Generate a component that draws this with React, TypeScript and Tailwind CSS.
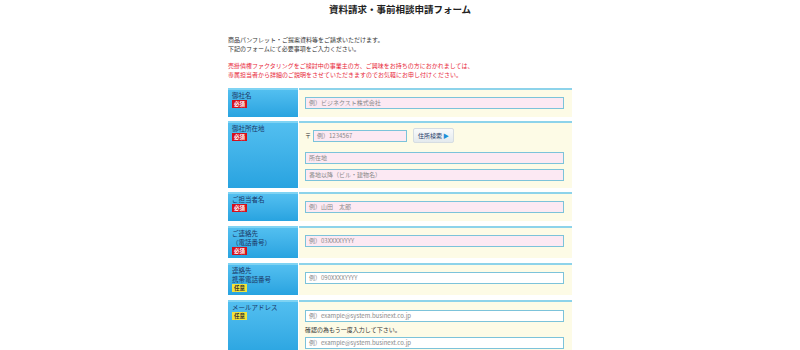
import React from "react";

const font = "font-['Noto_Sans_CJK_JP','Noto_Sans',sans-serif]";

function Badge({ kind }: { kind: "req" | "opt" }) {
  return kind === "req" ? (
    <div className="w-fit bg-[#d4101c] text-white text-[5.5px] leading-[8px] px-[2px] font-bold">必須</div>
  ) : (
    <div className="w-fit bg-[#f3e33a] text-[#333] text-[5.5px] leading-[8px] px-[2px] font-bold">任意</div>
  );
}

function Field({ placeholder, pink = true, className = "" }: { placeholder: string; pink?: boolean; className?: string }) {
  return (
    <div
      className={`h-[12px] border border-[#7cc3da] ${pink ? "bg-[#fce9f3]" : "bg-white"} text-[6px] leading-[10px] text-[#888] pl-[3px] ${className}`}
    >
      {placeholder}
    </div>
  );
}

function Row({
  label,
  kind,
  pad = "pt-[7px] pb-[8px]",
  children,
}: {
  label: string[];
  kind: "req" | "opt";
  pad?: string;
  children: React.ReactNode;
}) {
  return (
    <div className="flex leading-[8px]">
      <div className="w-[70px] shrink-0 border-t-2 border-[#7fd3f3] bg-gradient-to-b from-[#52bff0] to-[#27a3e0] px-[4px] pt-[1px] pb-[3px] mr-px">
        {label.map((l) => (
          <div key={l} className="text-[6.5px] leading-[9px] text-[#1b3766]">{l}</div>
        ))}
        <Badge kind={kind} />
      </div>
      <div className={`flex-1 border-t-2 border-[#8dd3ea] bg-[#fdfbe6] pl-[6px] pr-[8px] ${pad}`}>{children}</div>
    </div>
  );
}

export default function App() {
  return (
    <div className={`w-[800px] h-[350px] overflow-hidden bg-white ${font}`}>
      <div className="w-[344px] mx-auto">
        <h1 className="text-center text-[9.5px] font-bold text-[#222] pt-[3px] leading-[12px]">資料請求・事前相談申請フォーム</h1>
        <div className="mt-[20px] text-[6px] leading-[9px] text-[#333]">
          <p>商品パンフレット・ご提案資料等をご請求いただけます。</p>
          <p>下記のフォームにて必要事項をご入力ください。</p>
        </div>
        <div className="mt-[8px] text-[6px] leading-[9px] text-[#e8283a]">
          <p>売掛債権ファクタリングをご検討中の事業主の方、ご興味をお持ちの方におかれましては、</p>
          <p>専属担当者から詳細のご説明をさせていただきますのでお気軽にお申し付けください。</p>
        </div>

        <div className="mt-[9px] flex flex-col gap-[4px]">
          <Row label={["御社名"]} kind="req">
            <Field placeholder="例）ビジネクスト株式会社" />
          </Row>
          <Row label={["御社所在地"]} kind="req" pad="pt-[5px] pb-[7px]">
            <div className="flex items-center">
              <span className="text-[6px] text-[#333] w-[8px]">〒</span>
              <Field placeholder="例）1234567" className="w-[94px]" />
              <div className="ml-[6px] h-[15px] px-[4px] flex items-center gap-[1px] border border-[#d6dde2] rounded-[2px] bg-gradient-to-b from-[#f8fafb] to-[#e4eaee] text-[6px] text-[#1b3766]">
                住所検索
                <span className="text-[#1c8fd8] text-[6px] leading-none">▶</span>
              </div>
            </div>
            <Field placeholder="所在地" className="mt-[9px]" />
            <Field placeholder="番地以降（ビル・建物名）" className="mt-[5px]" />
          </Row>
          <Row label={["ご担当者名"]} kind="req">
            <Field placeholder="例）山田　太郎" />
          </Row>
          <div className="pt-px">
            <Row label={["ご連絡先", "（電話番号）"]} kind="req">
              <Field placeholder="例）03XXXXYYYY" />
            </Row>
          </div>
          <div className="pt-px">
            <Row label={["連絡先", "携帯電話番号"]} kind="opt">
              <Field placeholder="例）090XXXXYYYY" pink={false} />
            </Row>
          </div>
          <div className="pt-[1px]">
            <Row label={["メールアドレス"]} kind="opt" pad="pt-[8px] pb-[8px]">
              <Field placeholder="例）example@system.businext.co.jp" pink={false} />
              <div className="mt-[3px] text-[6px] leading-[9px] text-[#333]">確認の為もう一度入力して下さい。</div>
              <Field placeholder="例）example@system.businext.co.jp" pink={false} className="mt-[3px]" />
            </Row>
          </div>
        </div>
      </div>
    </div>
  );
}
